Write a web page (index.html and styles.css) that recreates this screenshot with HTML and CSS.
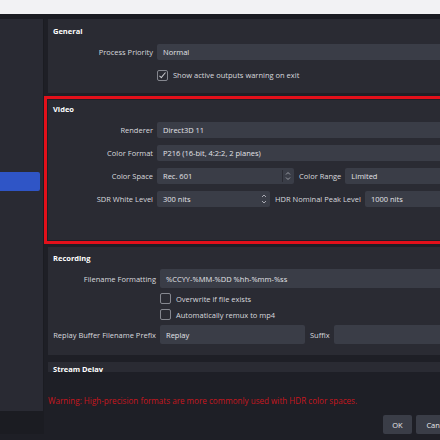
FILE: index.html
```html
<!DOCTYPE html>
<html lang="en">
<head>
  <meta charset="UTF-8">
  <title>Settings - Advanced</title>
  <link rel="stylesheet" href="styles.css">
</head>
<body>
  <div class="titlebar"></div>
  <div class="window">
    <div class="sidebar">
      <div class="side-item selected"></div>
    </div>

    <div class="main">
      <div class="scroll">
        <div class="group">
          <div class="group-title">General</div>
          <div class="row">
            <label class="lbl">Process Priority</label>
            <div class="field">Normal</div>
          </div>
          <div class="row check-row">
            <span class="check checked"></span>
            <span>Show active outputs warning on exit</span>
          </div>
        </div>

        <div class="group video">
          <div class="group-title">Video</div>
          <div class="row">
            <label class="lbl">Renderer</label>
            <div class="field">Direct3D 11</div>
          </div>
          <div class="row">
            <label class="lbl">Color Format</label>
            <div class="field">P216 (16-bit, 4:2:2, 2 planes)</div>
          </div>
          <div class="row">
            <label class="lbl">Color Space</label>
            <div class="field combo space">
              <span class="value">Rec. 601</span>
              <svg class="arrows" width="8" height="12" viewBox="0 0 8 12">
                <path d="M2 4.5 L4 2.5 L6 4.5 M2 7.5 L4 9.5 L6 7.5" fill="none" stroke="#a4a6ae" stroke-width="0.9"/>
              </svg>
            </div>
            <label class="lbl-inline">Color Range</label>
            <div class="field">Limited</div>
          </div>
          <div class="row">
            <label class="lbl">SDR White Level</label>
            <div class="field combo sdr">
              <span class="value">300 nits</span>
              <svg class="arrows" width="8" height="14" viewBox="0 0 8 14">
                <path d="M2 5 L4 3 L6 5 M2 9 L4 11 L6 9" fill="none" stroke="#b4b6be" stroke-width="0.9"/>
              </svg>
            </div>
            <label class="lbl-inline">HDR Nominal Peak Level</label>
            <div class="field">1000 nits</div>
          </div>
        </div>

        <div class="group recording">
          <div class="group-title">Recording</div>
          <div class="row tall">
            <label class="lbl">Filename Formatting</label>
            <div class="field">%CCYY-%MM-%DD %hh-%mm-%ss</div>
          </div>
          <div class="row check-row">
            <span class="check"></span>
            <span>Overwrite if file exists</span>
          </div>
          <div class="row check-row">
            <span class="check"></span>
            <span>Automatically remux to mp4</span>
          </div>
          <div class="row tall">
            <label class="lbl">Replay Buffer Filename Prefix</label>
            <div class="field prefix">Replay</div>
            <label class="lbl-inline">Suffix</label>
            <div class="field"></div>
          </div>
        </div>

        <div class="group delay">
          <div class="group-title">Stream Delay</div>
        </div>
      </div>

      <div class="warning">Warning: High-precision formats are more commonly used with HDR color spaces.</div>

      <div class="buttons">
        <button class="btn ok">OK</button>
        <button class="btn cancel">Cancel</button>
      </div>
    </div>
  </div>
</body>
</html>
```

FILE: styles.css
```css
body {
  margin: 0;
  width: 440px;
  height: 440px;
  overflow: hidden;
  background-color: #1e1f26;
  font-family: "Open Sans", "DejaVu Sans", sans-serif;
  font-size: 7.5px;
  color: #d8d9de;
}

.titlebar {
  height: 14px;
  background-color: #f2f2f4;
}

.window {
  display: flex;
  padding-top: 5px;
  background-color: #1b1c22;
}

.sidebar {
  width: 43px;
  height: 392px;
  flex-shrink: 0;
  background-color: #292a33;
  padding-top: 153px;
  padding-right: 3px;
  box-sizing: border-box;
}

.side-item.selected {
  height: 19px;
  background-color: #2f55c6;
  border-radius: 0 2px 2px 0;
}

.main {
  width: 424px;
  flex-shrink: 0;
  margin-left: 1px;
  background-color: #1e1f26;
}

.scroll {
  height: 353px;
  overflow: hidden;
  display: flex;
  flex-direction: column;
  gap: 7px;
  padding-left: 4px;
  background-color: #1e1f26;
}

.group {
  background-color: #2a2b33;
  padding: 6px 6px 10px 5px;
  display: flex;
  flex-direction: column;
  gap: 7px;
}

.group-title {
  height: 12px;
  line-height: 12px;
  font-weight: bold;
  color: #ffffff;
}

.video {
  padding-top: 3px;
  padding-bottom: 33px;
  outline: 3px solid #e2101a;
  outline-offset: 1px;
}

.recording {
  padding-top: 5px;
  padding-bottom: 11px;
  gap: 5px;
}

.recording .check-row {
  height: 15px;
  margin: -2px 0;
}

.delay {
  padding-top: 1px;
}

.row {
  display: flex;
  align-items: center;
  height: 16px;
}

.row.tall {
  height: 19px;
}

.lbl {
  width: 100px;
  flex-shrink: 0;
  text-align: right;
  margin-right: 4px;
  white-space: nowrap;
}

.recording .lbl {
  width: 103px;
}

.lbl-inline {
  flex-shrink: 0;
  margin: 0 4px 0 5px;
  white-space: nowrap;
}

.field {
  flex: 1;
  height: 100%;
  background-color: #3a3d47;
  border-radius: 2px;
  display: flex;
  align-items: center;
  padding-left: 6px;
  box-sizing: border-box;
  color: #e2e3e7;
  white-space: nowrap;
}

.combo {
  flex: none;
  justify-content: space-between;
  padding-right: 2px;
}

.combo.space {
  width: 137px;
}

.combo.sdr {
  width: 113px;
}

.field.prefix {
  flex: none;
  width: 145px;
}

.arrows {
  display: block;
  flex-shrink: 0;
}

.space .arrows {
  border-left: 1px solid #2a2b33;
  padding-left: 1px;
}

.check-row {
  padding-left: 104px;
  gap: 5px;
}

.recording .check-row {
  padding-left: 107px;
}

.check {
  width: 9px;
  height: 9px;
  border: 1px solid #85878f;
  border-radius: 2px;
  position: relative;
  flex-shrink: 0;
}

.check.checked::after {
  content: "";
  position: absolute;
  left: 3px;
  top: 0px;
  width: 2px;
  height: 6px;
  border-right: 1px solid #c8c9ce;
  border-bottom: 1px solid #c8c9ce;
  transform: rotate(40deg);
}

.warning {
  margin-top: 23px;
  padding-left: 4px;
  height: 11px;
  line-height: 11px;
  font-size: 8.1px;
  color: #c8161e;
  white-space: nowrap;
}

.buttons {
  display: flex;
  justify-content: flex-end;
  gap: 4px;
  margin-top: 9px;
  padding-right: 8px;
}

.btn {
  height: 19px;
  border: none;
  border-radius: 2px;
  background-color: #3a3d47;
  color: #e6e7ea;
  font-family: inherit;
  font-size: 7.5px;
  padding: 0;
}

.btn.ok {
  width: 29px;
}

.btn.cancel {
  width: 44px;
}
```
